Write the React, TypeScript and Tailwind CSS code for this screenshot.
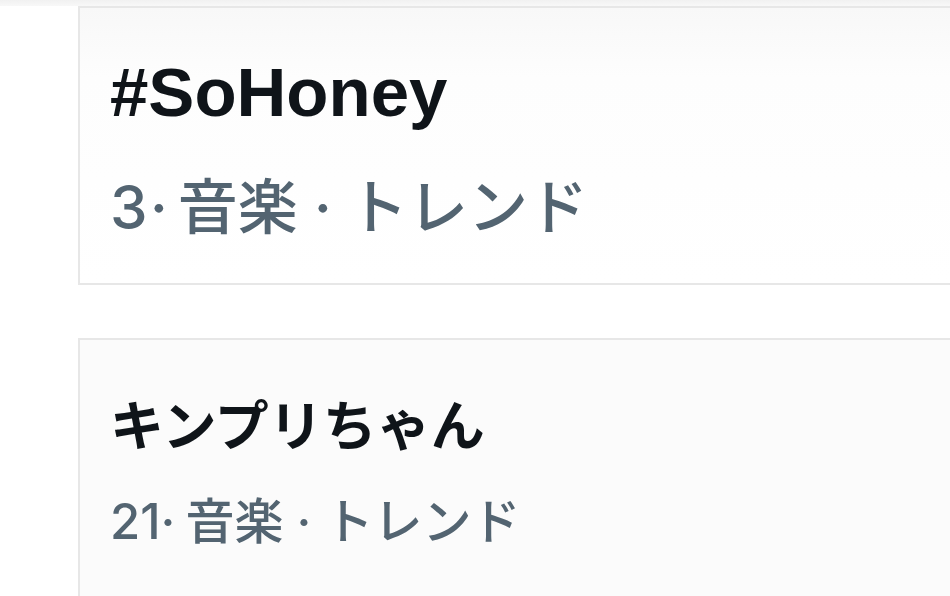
const head = "font-['Liberation_Sans','Noto_Sans_CJK_JP',sans-serif]";
const meta = "font-['Inter','Noto_Sans_CJK_JP',sans-serif]";

function TrendCard({
  title,
  rank,
  className,
  titleClass,
  subClass,
  dotClass,
}: {
  title: string;
  rank: string;
  className: string;
  titleClass: string;
  subClass: string;
  dotClass: string;
}) {
  return (
    <div className={`border-2 border-r-0 border-[#e7e7e7] pl-[30px] ${className}`}>
      <div className={`${head} font-bold text-[#0f1419] leading-none whitespace-nowrap ${titleClass}`}>{title}</div>
      <div className={`${meta} font-medium text-[#536471] leading-none whitespace-nowrap ${subClass}`}>
        {rank}
        <span className={dotClass}>·</span>音楽 · トレンド
      </div>
    </div>
  );
}

export default function App() {
  return (
    <div className="w-[950px] h-[596px] overflow-hidden bg-white">
      <div className="h-[6px] bg-gradient-to-b from-[#f1f1f1] to-[#f8f8f8]" />
      <div className="pl-[78px] flex flex-col">
        <TrendCard
          title="#SoHoney"
          rank="3"
          className="h-[279px] pt-[50px] bg-gradient-to-b from-[#f8f8f8] via-[#fdfdfd] via-25% to-white"
          titleClass="text-[69px]"
          subClass="mt-[50px] text-[60px]"
          dotClass="ml-[2px] mr-[10px]"
        />
        <TrendCard
          title="キンプリちゃん"
          rank="21"
          className="mt-[53px] h-[300px] pt-[60px] border-b-0 bg-[#fbfbfb]"
          titleClass="text-[54px]"
          subClass="mt-[43px] text-[49px]"
          dotClass="mr-[10px]"
        />
      </div>
    </div>
  );
}
